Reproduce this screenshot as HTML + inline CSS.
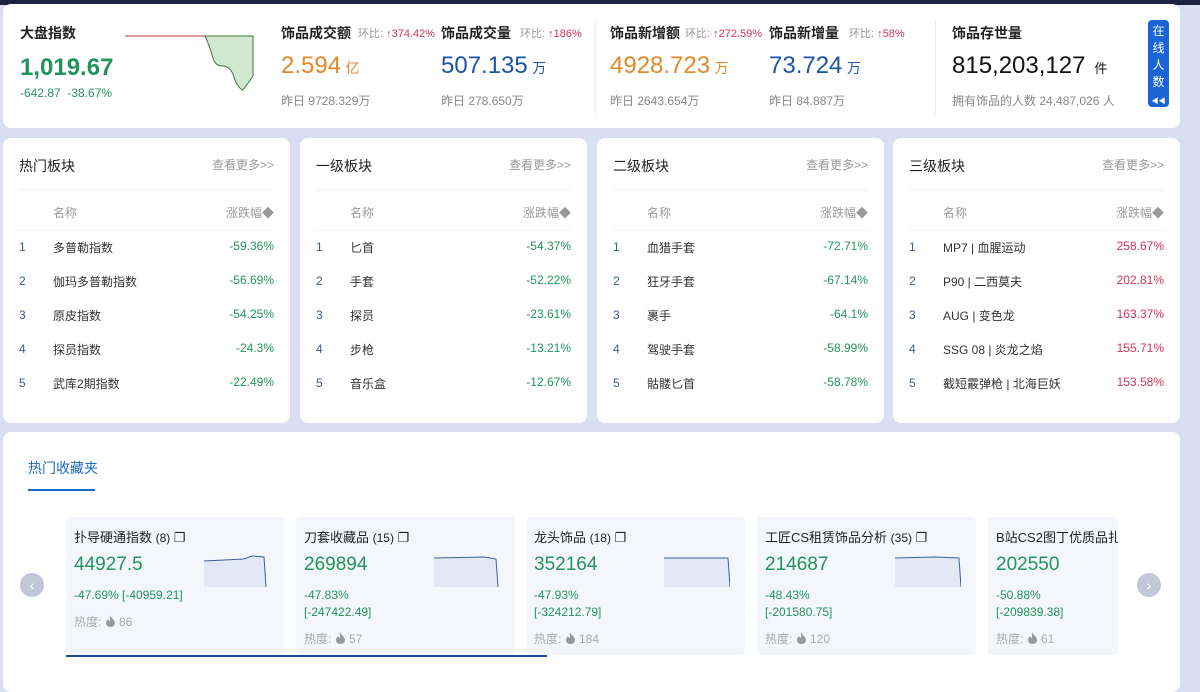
<!DOCTYPE html>
<html><head><meta charset="utf-8"><style>
*{margin:0;padding:0;box-sizing:border-box}
body{width:1200px;height:674px;overflow:hidden;background:#d9def2;font-family:"Liberation Sans","Noto Sans CJK SC",sans-serif;position:relative;color:#222}
.topbar{position:absolute;left:0;top:0;width:1200px;height:5px;background:#1c2340}
.card{position:absolute;background:#fff;border-radius:8px}
.abs{position:absolute;white-space:nowrap}
.t{font-size:14px;font-weight:bold;color:#222}
.hb{font-size:11px;color:#999}.hb b{color:#d0365a;font-weight:normal}
.big{font-size:24px}
.unit{font-size:14px}
.y{font-size:12px;color:#888}
.green{color:#22945a}.org{color:#e0892a}.blue{color:#1b55a8}
.panel h3{position:absolute;left:16px;top:18px;font-size:14px;font-weight:normal;color:#222}
.panel .more{position:absolute;right:16px;top:18px;font-size:12px;color:#999}
.panel .line{position:absolute;left:16px;right:16px;height:1px;background:#f0f0f0}
.row{position:absolute;left:16px;right:16px;font-size:12px;height:16px}
.row .n{position:absolute;left:0;top:1px;color:#3a5a9a}
.row .nm{position:absolute;left:34px;color:#333}
.row .v{position:absolute;right:0;color:#22945a}
.row .v.r{color:#d0365a}
.cc{position:absolute;top:517px;width:219px;height:138px;background:#f3f7fc;overflow:hidden;border-radius:4px}
.cc .ti{position:absolute;left:8px;top:10px;font-size:13px;color:#222;white-space:nowrap}
.cc .ti small{font-size:12px}
.cc .num{position:absolute;left:8px;top:37px;font-size:19px;color:#22945a}
.cc .pc{position:absolute;left:8px;top:70px;font-size:12px;color:#22945a;line-height:17px}
.cc .hot{position:absolute;left:8px;font-size:12px;color:#aaa}
.cc .hot svg{position:static;vertical-align:-1px}
.cc > svg{position:absolute;left:138px;top:38px}
.arr{position:absolute;width:24px;height:24px;border-radius:50%;background:#c1c7d6;color:#fff;font-size:14px;text-align:center;line-height:24px}
</style></head><body>
<div class="topbar"></div>
<div class="card" style="left:3px;top:4px;width:1177px;height:124px">
<div class="abs t" style="left:17px;top:19px">大盘指数</div>
<div class="abs green" style="left:17px;top:50px;font-size:24px;font-weight:bold">1,019.67</div>
<div class="abs green" style="left:17px;top:82px;font-size:12px">-642.87 &nbsp;-38.67%</div>
<svg class="abs" style="left:122px;top:28px" width="130" height="64"><path d="M80 4 L128 4 L128 44 Q124 50 118 58 Q112 56 108 42 Q104 34 98 34 Q90 34 88 26 Q84 12 80 4Z" fill="#cfe8cf" stroke="#3a7a3a" stroke-width="1"/><path d="M0 4 L80 4" stroke="#c0605a" stroke-width="1.2"/></svg>
<div class="abs t" style="left:278px;top:19px">饰品成交额</div><div class="abs hb" style="left:355px;top:21px">环比: <b>↑374.42%</b></div>
<div class="abs org" style="left:278px;top:48px"><span class="big">2.594</span> <span class="unit">亿</span></div>
<div class="abs y" style="left:278px;top:88px">昨日 9728.329万</div>
<div class="abs t" style="left:438px;top:19px">饰品成交量</div><div class="abs hb" style="left:517px;top:21px">环比: <b>↑186%</b></div>
<div class="abs blue" style="left:438px;top:48px"><span class="big">507.135</span> <span class="unit">万</span></div>
<div class="abs y" style="left:438px;top:88px">昨日 278.650万</div>
<div class="abs" style="left:592px;top:16px;width:1px;height:95px;background:#eee"></div>
<div class="abs t" style="left:607px;top:19px">饰品新增额</div><div class="abs hb" style="left:682px;top:21px">环比: <b>↑272.59%</b></div>
<div class="abs org" style="left:607px;top:48px"><span class="big">4928.723</span> <span class="unit">万</span></div>
<div class="abs y" style="left:607px;top:88px">昨日 2643.654万</div>
<div class="abs t" style="left:766px;top:19px">饰品新增量</div><div class="abs hb" style="left:846px;top:21px">环比: <b>↑58%</b></div>
<div class="abs blue" style="left:766px;top:48px"><span class="big">73.724</span> <span class="unit">万</span></div>
<div class="abs y" style="left:766px;top:88px">昨日 84.887万</div>
<div class="abs" style="left:932px;top:16px;width:1px;height:95px;background:#eee"></div>
<div class="abs t" style="left:949px;top:19px">饰品存世量</div>
<div class="abs" style="left:949px;top:48px;color:#111"><span class="big">815,203,127</span> &nbsp;<span style="font-size:13px">件</span></div>
<div class="abs y" style="left:949px;top:88px">拥有饰品的人数 24,487,026 人</div>
<div class="abs" style="left:1145px;top:16px;width:21px;height:87px;background:#1a64d6;border-radius:4px;color:#fff;font-size:12px;line-height:17px;text-align:center;padding-top:3px">在<br>线<br>人<br>数<br><span style="font-size:7px;line-height:10px">◀◀</span></div>
</div>

<div class="card panel" style="left:3px;top:138px;width:287px;height:285px">
<h3>热门板块</h3><div class="more">查看更多&gt;&gt;</div><div class="line" style="top:51px"></div>
<div class="row" style="top:66px"><span class="nm" style="color:#999">名称</span><span class="v" style="color:#999">涨跌幅◆</span></div>
<div class="line" style="top:92px"></div>
<div class="row" style="top:101px"><span class="n">1</span><span class="nm">多普勒指数</span><span class="v">-59.36%</span></div>
<div class="row" style="top:135px"><span class="n">2</span><span class="nm">伽玛多普勒指数</span><span class="v">-56.69%</span></div>
<div class="row" style="top:169px"><span class="n">3</span><span class="nm">原皮指数</span><span class="v">-54.25%</span></div>
<div class="row" style="top:203px"><span class="n">4</span><span class="nm">探员指数</span><span class="v">-24.3%</span></div>
<div class="row" style="top:237px"><span class="n">5</span><span class="nm">武库2期指数</span><span class="v">-22.49%</span></div>
</div>
<div class="card panel" style="left:300px;top:138px;width:287px;height:285px">
<h3>一级板块</h3><div class="more">查看更多&gt;&gt;</div><div class="line" style="top:51px"></div>
<div class="row" style="top:66px"><span class="nm" style="color:#999">名称</span><span class="v" style="color:#999">涨跌幅◆</span></div>
<div class="line" style="top:92px"></div>
<div class="row" style="top:101px"><span class="n">1</span><span class="nm">匕首</span><span class="v">-54.37%</span></div>
<div class="row" style="top:135px"><span class="n">2</span><span class="nm">手套</span><span class="v">-52.22%</span></div>
<div class="row" style="top:169px"><span class="n">3</span><span class="nm">探员</span><span class="v">-23.61%</span></div>
<div class="row" style="top:203px"><span class="n">4</span><span class="nm">步枪</span><span class="v">-13.21%</span></div>
<div class="row" style="top:237px"><span class="n">5</span><span class="nm">音乐盒</span><span class="v">-12.67%</span></div>
</div>
<div class="card panel" style="left:597px;top:138px;width:287px;height:285px">
<h3>二级板块</h3><div class="more">查看更多&gt;&gt;</div><div class="line" style="top:51px"></div>
<div class="row" style="top:66px"><span class="nm" style="color:#999">名称</span><span class="v" style="color:#999">涨跌幅◆</span></div>
<div class="line" style="top:92px"></div>
<div class="row" style="top:101px"><span class="n">1</span><span class="nm">血猎手套</span><span class="v">-72.71%</span></div>
<div class="row" style="top:135px"><span class="n">2</span><span class="nm">狂牙手套</span><span class="v">-67.14%</span></div>
<div class="row" style="top:169px"><span class="n">3</span><span class="nm">裹手</span><span class="v">-64.1%</span></div>
<div class="row" style="top:203px"><span class="n">4</span><span class="nm">驾驶手套</span><span class="v">-58.99%</span></div>
<div class="row" style="top:237px"><span class="n">5</span><span class="nm">骷髅匕首</span><span class="v">-58.78%</span></div>
</div>
<div class="card panel" style="left:893px;top:138px;width:287px;height:285px">
<h3>三级板块</h3><div class="more">查看更多&gt;&gt;</div><div class="line" style="top:51px"></div>
<div class="row" style="top:66px"><span class="nm" style="color:#999">名称</span><span class="v" style="color:#999">涨跌幅◆</span></div>
<div class="line" style="top:92px"></div>
<div class="row" style="top:101px"><span class="n">1</span><span class="nm">MP7 | 血腥运动</span><span class="v r">258.67%</span></div>
<div class="row" style="top:135px"><span class="n">2</span><span class="nm">P90 | 二西莫夫</span><span class="v r">202.81%</span></div>
<div class="row" style="top:169px"><span class="n">3</span><span class="nm">AUG | 变色龙</span><span class="v r">163.37%</span></div>
<div class="row" style="top:203px"><span class="n">4</span><span class="nm">SSG 08 | 炎龙之焰</span><span class="v r">155.71%</span></div>
<div class="row" style="top:237px"><span class="n">5</span><span class="nm">截短霰弹枪 | 北海巨妖</span><span class="v r">153.58%</span></div>
</div>

<div class="card" style="left:3px;top:432px;width:1177px;height:260px"></div>
<div class="abs" style="left:28px;top:458px;font-size:14px;color:#1b6ac9">热门收藏夹</div>
<div class="abs" style="left:28px;top:489px;width:67px;height:2px;background:#1b6ac9"></div>
<div class="arr" style="left:20px;top:573px">‹</div>
<div class="arr" style="left:1137px;top:573px">›</div>

<div class="cc" style="left:66px"><div class="ti">扑导硬通指数 <small>(8)</small> ❐</div><div class="num">44927.5</div><div class="pc">-47.69% [-40959.21]</div><div class="hot" style="top:96px">热度: <svg width="11" height="12" viewBox="0 0 11 12"><path d="M5 0 C6 3 10 5 10 8 C10 10.5 8 12 5.5 12 C3 12 1 10.5 1 8 C1 6 2.5 5 3 4 C3.5 6 4.5 6 5 5.5 C5.5 4 4.5 2 5 0Z" fill="#999"/></svg> 86</div>
<svg width="66" height="32"><path d="M0 6 L40 4 L48 1 L60 2 L62 32 L0 32Z" fill="#e2e9f5"/><path d="M0 6 L40 4 L48 1 L60 2 L62 32" fill="none" stroke="#3b5f9c"/></svg></div>
<div class="cc" style="left:296px"><div class="ti">刀套收藏品 <small>(15)</small> ❐</div><div class="num">269894</div><div class="pc">-47.83%<br>[-247422.49]</div><div class="hot" style="top:113px">热度: <svg width="11" height="12" viewBox="0 0 11 12"><path d="M5 0 C6 3 10 5 10 8 C10 10.5 8 12 5.5 12 C3 12 1 10.5 1 8 C1 6 2.5 5 3 4 C3.5 6 4.5 6 5 5.5 C5.5 4 4.5 2 5 0Z" fill="#999"/></svg> 57</div>
<svg width="66" height="32"><path d="M0 3 L50 2 L62 4 L64 32 L0 32Z" fill="#e2e9f5"/><path d="M0 3 L50 2 L62 4 L64 32" fill="none" stroke="#3b5f9c"/></svg></div>
<div class="cc" style="left:526px"><div class="ti">龙头饰品 <small>(18)</small> ❐</div><div class="num">352164</div><div class="pc">-47.93%<br>[-324212.79]</div><div class="hot" style="top:113px">热度: <svg width="11" height="12" viewBox="0 0 11 12"><path d="M5 0 C6 3 10 5 10 8 C10 10.5 8 12 5.5 12 C3 12 1 10.5 1 8 C1 6 2.5 5 3 4 C3.5 6 4.5 6 5 5.5 C5.5 4 4.5 2 5 0Z" fill="#999"/></svg> 184</div>
<svg width="66" height="32"><path d="M0 3 L64 3 L66 32 L0 32Z" fill="#e2e9f5"/><path d="M0 3 L64 3 L66 32" fill="none" stroke="#3b5f9c"/></svg></div>
<div class="cc" style="left:757px"><div class="ti">工匠CS租赁饰品分析 <small>(35)</small> ❐</div><div class="num">214687</div><div class="pc">-48.43%<br>[-201580.75]</div><div class="hot" style="top:113px">热度: <svg width="11" height="12" viewBox="0 0 11 12"><path d="M5 0 C6 3 10 5 10 8 C10 10.5 8 12 5.5 12 C3 12 1 10.5 1 8 C1 6 2.5 5 3 4 C3.5 6 4.5 6 5 5.5 C5.5 4 4.5 2 5 0Z" fill="#999"/></svg> 120</div>
<svg width="66" height="32"><path d="M0 3 L40 2 L64 3 L66 32 L0 32Z" fill="#e2e9f5"/><path d="M0 3 L40 2 L64 3 L66 32" fill="none" stroke="#3b5f9c"/></svg></div>
<div class="cc" style="left:988px;width:130px"><div class="ti">B站CS2图丁优质品扎</div><div class="num">202550</div><div class="pc">-50.88%<br>[-209839.38]</div><div class="hot" style="top:113px">热度: <svg width="11" height="12" viewBox="0 0 11 12"><path d="M5 0 C6 3 10 5 10 8 C10 10.5 8 12 5.5 12 C3 12 1 10.5 1 8 C1 6 2.5 5 3 4 C3.5 6 4.5 6 5 5.5 C5.5 4 4.5 2 5 0Z" fill="#999"/></svg> 61</div></div>
<div class="abs" style="left:66px;top:655px;width:481px;height:2px;background:#1a4f95"></div>
</body></html>
